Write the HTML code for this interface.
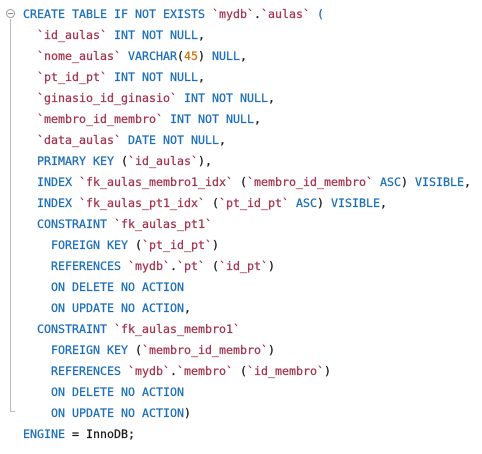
<!DOCTYPE html>
<html><head><style>
body{margin:0;background:#fff;width:482px;height:454px;overflow:hidden;position:relative}
pre{position:absolute;left:23px;top:4px;margin:0;font-family:"DejaVu Sans Mono","Liberation Mono",monospace;font-size:11.63px;line-height:21px;color:#1a1a1a;-webkit-text-stroke:0.25px currentColor}
.k{color:#1c6fb8}.i{color:#a3324c}.n{color:#d07010}
.fold{position:absolute;left:6px;top:9px;width:9px;height:9px;border:1px solid #999;border-radius:50%;box-sizing:border-box}
.fold:after{content:"";position:absolute;left:1px;top:3px;width:5px;height:1px;background:#888}
.vl{position:absolute;left:10px;top:19px;width:1px;height:392px;background:#bbb}
.hl{position:absolute;left:10px;top:411px;width:5px;height:1px;background:#bbb}
</style></head><body>
<div class="fold"></div><div class="vl"></div><div class="hl"></div>
<pre><span class="k">CREATE TABLE IF NOT EXISTS</span> <span class="i">`mydb`</span>.<span class="i">`aulas`</span> <span class="k">(</span>
  <span class="i">`id_aulas`</span> <span class="k">INT NOT NULL</span>,
  <span class="i">`nome_aulas`</span> <span class="k">VARCHAR</span>(<span class="n">45</span>) <span class="k">NULL</span>,
  <span class="i">`pt_id_pt`</span> <span class="k">INT NOT NULL</span>,
  <span class="i">`ginasio_id_ginasio`</span> <span class="k">INT NOT NULL</span>,
  <span class="i">`membro_id_membro`</span> <span class="k">INT NOT NULL</span>,
  <span class="i">`data_aulas`</span> <span class="k">DATE NOT NULL</span>,
  <span class="k">PRIMARY KEY</span> (<span class="i">`id_aulas`</span>),
  <span class="k">INDEX</span> <span class="i">`fk_aulas_membro1_idx`</span> (<span class="i">`membro_id_membro`</span> <span class="k">ASC</span>) <span class="k">VISIBLE</span>,
  <span class="k">INDEX</span> <span class="i">`fk_aulas_pt1_idx`</span> (<span class="i">`pt_id_pt`</span> <span class="k">ASC</span>) <span class="k">VISIBLE</span>,
  <span class="k">CONSTRAINT</span> <span class="i">`fk_aulas_pt1`</span>
    <span class="k">FOREIGN KEY</span> (<span class="i">`pt_id_pt`</span>)
    <span class="k">REFERENCES</span> <span class="i">`mydb`</span>.<span class="i">`pt`</span> (<span class="i">`id_pt`</span>)
    <span class="k">ON DELETE NO ACTION</span>
    <span class="k">ON UPDATE NO ACTION</span>,
  <span class="k">CONSTRAINT</span> <span class="i">`fk_aulas_membro1`</span>
    <span class="k">FOREIGN KEY</span> (<span class="i">`membro_id_membro`</span>)
    <span class="k">REFERENCES</span> <span class="i">`mydb`</span>.<span class="i">`membro`</span> (<span class="i">`id_membro`</span>)
    <span class="k">ON DELETE NO ACTION</span>
    <span class="k">ON UPDATE NO ACTION</span>)
<span class="k">ENGINE</span> = InnoDB;</pre>
</body></html>
